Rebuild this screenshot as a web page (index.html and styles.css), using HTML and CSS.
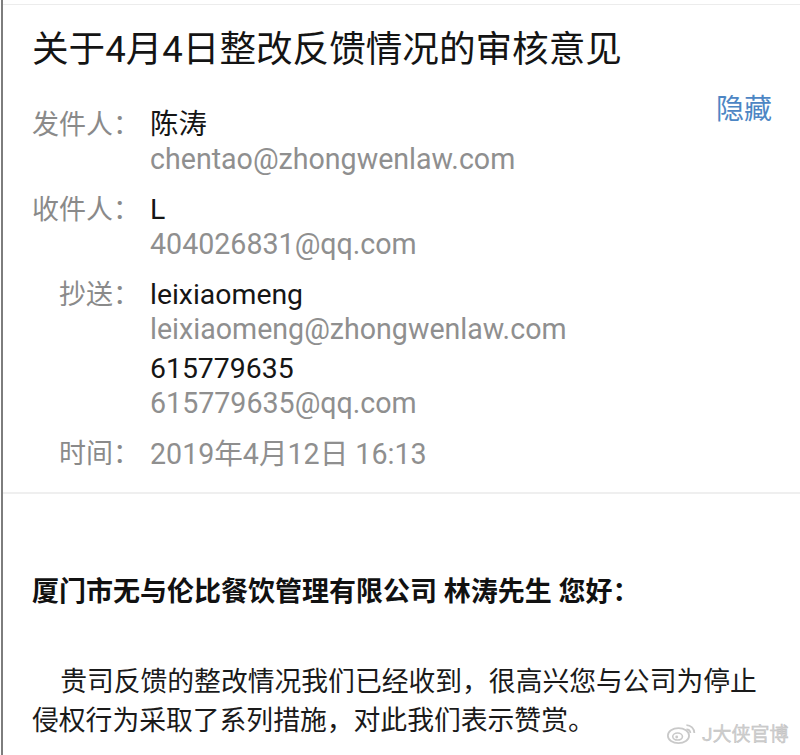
FILE: index.html
```html
<!DOCTYPE html>
<html lang="zh-CN">
  <head>
    <meta charset="utf-8" />
    <title>关于4月4日整改反馈情况的审核意见</title>
    <link rel="stylesheet" href="styles.css">
  </head>
  <body>
    <div class="page">
      <!-- mail header -->
      <div class="head">
        <h1 class="subject">关于4月4日整改反馈情况的审核意见</h1>

        <div class="meta">
          <div class="fields">
            <div class="label">发件人：</div>
            <div class="value">
              <div class="name">陈涛</div>
              <div class="addr">chentao@zhongwenlaw.com</div>
            </div>

            <div class="label">收件人：</div>
            <div class="value">
              <div class="name">L</div>
              <div class="addr">404026831@qq.com</div>
            </div>

            <div class="label">抄送：</div>
            <div class="value">
              <div class="name">leixiaomeng</div>
              <div class="addr">leixiaomeng@zhongwenlaw.com</div>
              <div class="name next">615779635</div>
              <div class="addr">615779635@qq.com</div>
            </div>

            <div class="label">时间：</div>
            <div class="value">
              <div class="addr">2019年4月12日 16:13</div>
            </div>
          </div>
          <a class="hide-link" href="#">隐藏</a>
        </div>
      </div>

      <!-- mail body -->
      <div class="content">
        <p class="greeting">厦门市无与伦比餐饮管理有限公司 林涛先生 您好：</p>
        <p class="para">贵司反馈的整改情况我们已经收到，很高兴您与公司为停止侵权行为采取了系列措施，对此我们表示赞赏。</p>
      </div>

      <div class="watermark">
        <svg width="30" height="24" viewBox="0 0 34 26">
          <ellipse cx="13" cy="16" rx="12" ry="8.5" fill="none" stroke="#c9c9c9" stroke-width="2"/>
          <ellipse cx="12" cy="17" rx="5.5" ry="4" fill="none" stroke="#c9c9c9" stroke-width="1.8"/>
          <circle cx="11" cy="17.5" r="1.6" fill="#c9c9c9"/>
          <path d="M22 4 A9 9 0 0 1 31 13" fill="none" stroke="#c9c9c9" stroke-width="2"/>
          <path d="M22 9 A4.5 4.5 0 0 1 26.5 13" fill="none" stroke="#c9c9c9" stroke-width="2"/>
        </svg>
        <span>J大侠官博</span>
      </div>
    </div>
  </body>
</html>
```

FILE: styles.css
```css
body {
  margin: 0;
  background: #fff;
  font-family: Roboto, "Noto Sans CJK SC", sans-serif;
  color: #1a1a1a;
}

.page {
  position: relative;
  height: 755px;
  margin-left: 1px;
  border-left: 2px solid #7d7d7d;
  overflow: hidden;
}

.head {
  border-top: 1px solid #ececec;
  margin-top: 4px;
  padding: 0 28px 0 29px;
  border-bottom: 2px solid #efefef;
}

.subject {
  margin: 0;
  padding-top: 25px;
  font-size: 36.6px;
  font-weight: normal;
  line-height: 40px;
  color: #141414;
}

.meta {
  display: flex;
  justify-content: space-between;
  align-items: flex-start;
  padding-top: 38px;
  padding-bottom: 21px;
}

.fields {
  display: grid;
  grid-template-columns: 108px 1fr;
  column-gap: 10px;
  row-gap: 17px;
}

.label {
  text-align: right;
  font-size: 27px;
  line-height: 34px;
  color: #8a8a8a;
}

.value {
  font-size: 28.6px;
  line-height: 34px;
}

.name {
  color: #151515;
  font-size: 28.4px;
}

.name.next {
  margin-top: 6px;
}

.addr {
  color: #8f8f8f;
}

.hide-link {
  margin-top: -15px;
  font-size: 28px;
  line-height: 34px;
  color: #4d86c4;
  text-decoration: none;
}

.content {
  padding: 78px 20px 0 29px;
}

.greeting {
  margin: 0;
  font-size: 27px;
  font-weight: bold;
  line-height: 40px;
  color: #111;
}

.para {
  margin: 51px 0 0;
  font-size: 26.8px;
  line-height: 39px;
  text-indent: 1.05em;
  color: #1a1a1a;
}

.watermark {
  position: absolute;
  left: 664px;
  top: 719px;
  display: flex;
  align-items: center;
  gap: 5px;
  font-size: 19px;
  color: #d0d0d0;
  -webkit-text-stroke: 0.4px #bdbdbd;
}
```
